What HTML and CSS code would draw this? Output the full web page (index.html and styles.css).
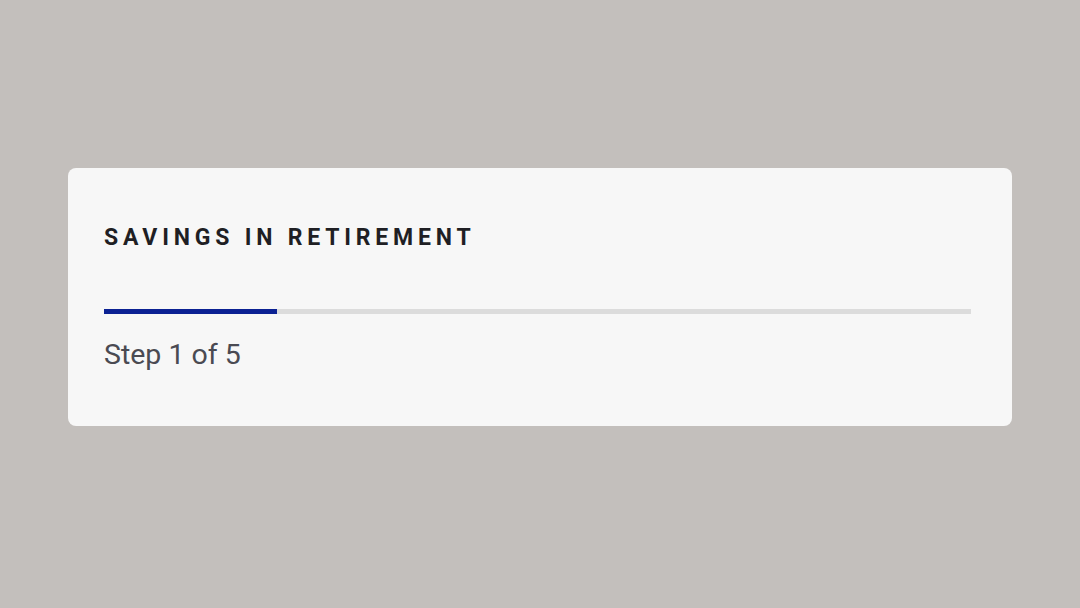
FILE: index.html
```html
<!DOCTYPE html>
<html lang="en">
<head>
    <meta charset="UTF-8">
    <meta name="viewport" content="width=device-width, initial-scale=1.0">
    <title>Savings in retirement</title>
    <link rel="stylesheet" href="styles.css">
</head>
<body>
    <div class="card">
        <h2 class="title">SAVINGS IN RETIREMENT</h2>
        <div class="progress">
            <div class="progress-fill" style="width: 20%"></div>
        </div>
        <p class="step">Step 1 of 5</p>
    </div>
</body>
</html>
```

FILE: styles.css
```css
body {
    font-family: Roboto, "Liberation Sans", sans-serif;
    margin: 0;
    height: 608px;
    background-color: #c3bfbc;
    padding: 168px 68px 0 68px;
    box-sizing: border-box;
}
.card {
    width: 944px;
    height: 258px;
    box-sizing: border-box;
    background-color: #f7f7f7;
    border-radius: 8px;
    padding: 57px 41px 0 36px;
}
.title {
    margin: 0;
    font-size: 23px;
    line-height: 26px;
    font-weight: 700;
    letter-spacing: 4.8px;
    color: #1f1f24;
}
.progress {
    margin-top: 58px;
    height: 5px;
    background-color: #dcdcdc;
}
.progress-fill {
    height: 100%;
    background-color: #0b2193;
}
.step {
    margin: 24px 0 0 0;
    font-size: 28.5px;
    line-height: 34px;
    color: #4a4a52;
}
```
